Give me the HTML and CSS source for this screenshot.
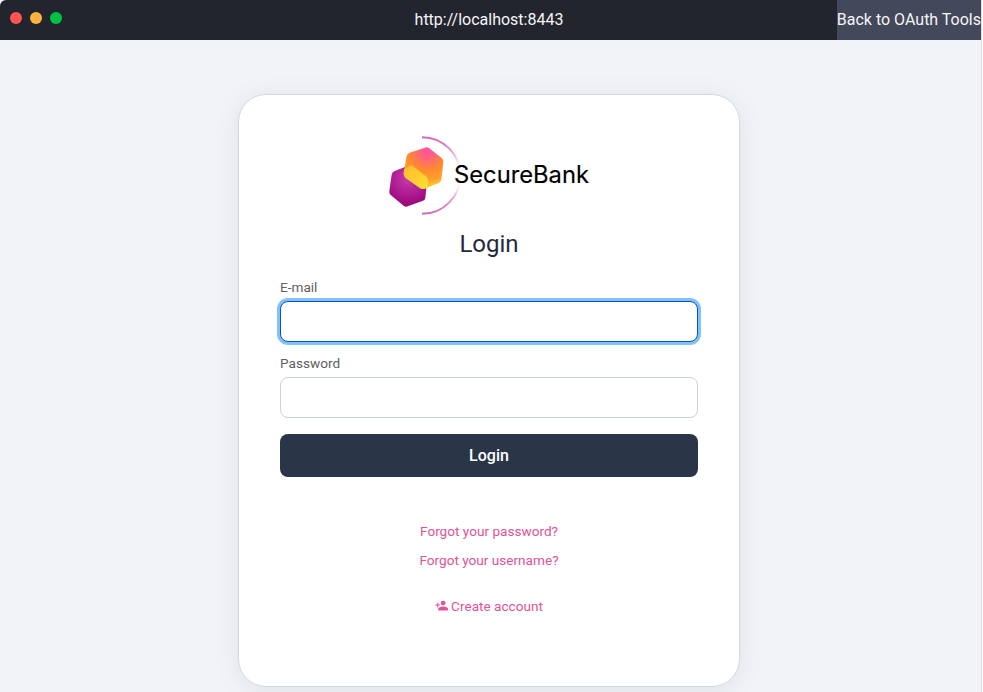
FILE: index.html
```html
<!DOCTYPE html>
<html lang="en">
<head>
<meta charset="utf-8">
<title>SecureBank Login</title>
<link rel="stylesheet" href="styles.css">
</head>
<body>
<div class="window">
  <header class="titlebar">
    <div class="lights"><span class="light red"></span><span class="light amber"></span><span class="light green"></span></div>
    <div class="address">http://localhost:8443</div>
    <a class="back">Back to OAuth Tools</a>
  </header>
  <main class="page">
    <form class="card">
      <svg class="logo" width="220" height="100" viewBox="0 0 660 300" role="img" aria-label="SecureBank">
        <defs>
          <radialGradient id="orange" gradientUnits="userSpaceOnUse" cx="142" cy="80" r="112">
            <stop offset="0" stop-color="#ff4da8"/><stop offset=".5" stop-color="#ff8b2e"/><stop offset=".75" stop-color="#ff9e2d"/><stop offset="1" stop-color="#fddc30"/>
          </radialGradient>
          <radialGradient id="purple" gradientUnits="userSpaceOnUse" cx="85" cy="160" r="90">
            <stop offset="0" stop-color="#c83cac"/><stop offset="1" stop-color="#960078"/>
          </radialGradient>
          <linearGradient id="yellow" x1="0" y1="0" x2="1" y2="1">
            <stop offset="0" stop-color="#ffba30"/><stop offset="1" stop-color="#fde030"/>
          </linearGradient>
          <linearGradient id="arc" gradientUnits="userSpaceOnUse" x1="0" y1="36" x2="0" y2="267">
            <stop offset="0" stop-color="#d06bb5"/><stop offset=".15" stop-color="#dc8ec6"/><stop offset=".32" stop-color="#f8e4f2"/><stop offset=".42" stop-color="#fff"/><stop offset=".58" stop-color="#fff"/><stop offset=".68" stop-color="#f8e4f2"/><stop offset=".85" stop-color="#dc8ec6"/><stop offset="1" stop-color="#d06bb5"/>
          </linearGradient>
        </defs>
        <g transform="translate(3 0)">
        <path d="M126 36.500A115 115 0 0 1 126 266.500" fill="none" stroke="url(#arc)" stroke-width="6"/>
        <path d="M44 138L90 120L142 160L136 218Q135 225 129 227L83 244Q77 247 71 242L31 209Q27 205 28 198L35 149Q36 141 44 138Z" fill="url(#purple)"/>
        <path d="M89 83L134 68Q141 65 148 70L185 99Q191 104 190 111L184 164Q183 172 176 174L134 191Q126 194 119 188L76 158Q70 152 71 144L80 93Q81 86 89 83Z" fill="url(#orange)"/>
        <path d="M73 132L88 123Q95 119 102 125L139 155Q145 160 145 168L143 186L134 191Q126 194 119 188L76 158Q70 152 71 144Z" fill="url(#yellow)"/>
        <text class="wordmark" x="222" y="173" textLength="405" lengthAdjust="spacingAndGlyphs">SecureBank</text>
        </g>
      </svg>
      <h1 class="title">Login</h1>
      <label class="label" for="email">E-mail</label>
      <input class="field focused" id="email" type="text">
      <label class="label second" for="password">Password</label>
      <input class="field" id="password" type="password">
      <button class="submit" type="button">Login</button>
      <nav class="links">
        <a>Forgot your password?</a>
        <a>Forgot your username?</a>
        <a class="create"><svg class="icon" width="13" height="13" viewBox="0 0 24 24"><path fill="currentColor" d="M15 12a4.500 4.500 0 1 0 0-9 4.500 4.500 0 0 0 0 9zM6 10V7H4v3H1v2h3v3h2v-3h3v-2zM15 14c-3 0-9 1.500-9 4.500V21h18v-2.500c0-3-6-4.500-9-4.500z"/></svg>Create account</a>
      </nav>
    </form>
  </main>
</div>
</body>
</html>
```
FILE: styles.css
```css
* { box-sizing: border-box; }
body {
  margin: 0;
  height: 692px;
  overflow: hidden;
  background: #fff;
  font-family: Roboto, "Liberation Sans", sans-serif;
}
.window {
  width: 982px;
  height: 692px;
  border-right: 1px solid #dddee2;
  border-top-left-radius: 6px;
  background: #f1f3f7;
  overflow: hidden;
}
.titlebar {
  display: grid;
  grid-template-columns: 1fr auto 1fr;
  height: 40px;
  background: #23252e;
  color: #f5f5f7;
  font-size: 16px;
  line-height: 39px;
}
.lights { display: flex; gap: 8px; padding: 12px 0 0 10px; }
.light { width: 12px; height: 12px; border-radius: 50%; }
.red { background: #ff5550; }
.amber { background: #ffb33e; }
.green { background: #00c343; }
.address { padding-right: 3px; }
.back { justify-self: end; background: #43485a; white-space: nowrap; }
.page { display: flex; justify-content: center; padding: 54px 3px 0 0; }
.card {
  display: flex;
  flex-direction: column;
  width: 502px;
  height: 593px;
  padding: 30px 41px 0;
  border: 1px solid #d3d8dd;
  border-radius: 28px;
  background: #fff;
  box-shadow: 0 3px 24px rgba(75, 110, 115, .11);
}
.logo { align-self: center; }
.wordmark { font: 400 71px Inter, sans-serif; fill: #000; stroke: #000; stroke-width: .5px; }
.title {
  margin: 5px 0 21px;
  color: #222b3c;
  font-size: 24px;
  font-weight: 400;
  line-height: 28px;
  text-align: center;
}
.label { height: 22px; color: #606060; font-size: 13.6px; line-height: 17px; }
.second { height: 21px; line-height: 15px; }
.field {
  width: 100%;
  height: 41px;
  margin: 0 0 14px;
  border: 1px solid #c8d1dc;
  border-radius: 8px;
  background: #fff;
  outline: 0;
}
.focused { border-color: #0753b8; box-shadow: 0 0 0 3px #82c1fb; }
.submit {
  height: 43px;
  margin: 2px 0 46px;
  padding: 0;
  border: 0;
  border-radius: 8px;
  background: #2b3548;
  color: #fff;
  font: 500 16px Roboto, sans-serif;
}
.links { display: flex; flex-direction: column; align-items: center; color: #e25297; font-size: 13.6px; line-height: 17px; gap: 12px; }
.create { display: flex; align-items: center; gap: 3px; margin-top: 17px; }
.icon { margin-bottom: 2px; }
```
